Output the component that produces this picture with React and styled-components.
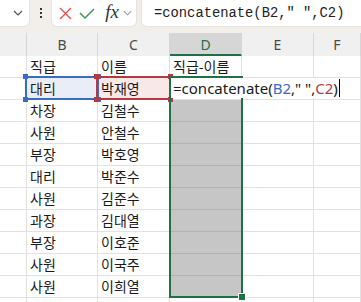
import styled, { createGlobalStyle } from 'styled-components';

const GlobalStyle = createGlobalStyle`
  html, body {
    margin: 0;
    padding: 0;
    width: 361px;
    height: 302px;
    overflow: hidden;
    background: #ffffff;
    font-family: "Noto Sans CJK KR", "Noto Sans", sans-serif;
  }
`;

const COLS = [27, 71, 72, 72, 72];
const ROW_H = 22;
const TOP = 56; // first data row

const Page = styled.div`
  width: 361px;
  height: 302px;
  overflow: hidden;
  display: flex;
  flex-direction: column;
`;

// toolbar
const Toolbar = styled.div`
  height: 33px;
  flex: none;
  background: #f2efeb;
  display: flex;
  align-items: flex-start;
  gap: 6px;
`;

const Box = styled.div`
  margin-top: -5px;
  height: 31px;
  background: #ffffff;
  border-radius: 5px;
  box-shadow: 0 0 0 1px #e6e3df;
  display: flex;
  align-items: center;
  box-sizing: border-box;
`;

const NameBox = styled(Box)`
  margin-left: -12px;
  width: 41px;
  justify-content: flex-end;
  padding: 5px 6px 0 0;
`;

const Dots = styled.div`
  width: 11px;
  height: 26px;
  display: flex;
  flex-direction: column;
  align-items: center;
  justify-content: center;
  gap: 2px;
  span {
    width: 2px;
    height: 2px;
    background: #333;
  }
`;

const FxBox = styled(Box)`
  width: 84px;
  padding: 5px 0 0 6px;
  gap: 0;
`;

const IconSlot = styled.div`
  width: ${p => p.$w}px;
  display: flex;
  align-items: center;
  justify-content: center;
`;

const Fx = styled.span`
  font-family: "Liberation Serif", "DejaVu Serif", serif;
  font-style: italic;
  font-size: 19px;
  color: #333;
  line-height: 1;
  margin-top: -3px;
`;

const FormulaBar = styled(Box)`
  flex: 1;
  margin-right: -10px;
  padding: 5px 0 0 12px;
  font-family: "Liberation Mono", monospace;
  font-size: 13.8px;
  color: #222;
  white-space: pre;
`;

// sheet
const Sheet = styled.div`
  position: relative;
  flex: 1;
`;

const Row = styled.div`
  display: grid;
  grid-template-columns: ${COLS.map(c => c + 'px').join(' ')} 1fr;
  height: ${p => p.$h}px;
`;

const HeadCell = styled.div`
  box-sizing: border-box;
  border-right: 1px solid #d6d6d6;
  border-bottom: ${p => (p.$active ? '3px solid #1e7145' : '1px solid #c4c4c4')};
  background: ${p => (p.$active ? '#d6d6d6' : '#f0f0f0')};
  color: ${p => (p.$active ? '#1e7145' : '#4a4a4a')};
  font-family: "Noto Sans", sans-serif;
  font-size: 14px;
  display: flex;
  align-items: center;
  justify-content: center;
  padding-top: ${p => (p.$active ? 2 : 0)}px;
`;

const Cell = styled.div`
  box-sizing: border-box;
  border-right: 1px solid ${p => (p.$sel ? '#b2b2b2' : '#e1e1e1')};
  border-bottom: 1px solid ${p => (p.$sel ? '#b2b2b2' : '#e1e1e1')};
  background: ${p => p.$fill || '#ffffff'};
  font-size: 14px;
  color: #1a1a1a;
  padding: 0 0 1px 3px;
  display: flex;
  align-items: center;
  white-space: nowrap;
`;

const Frame = styled.div`
  position: absolute;
  left: ${p => p.$x}px;
  top: ${p => p.$y}px;
  width: ${p => p.$w}px;
  height: ${p => p.$h}px;
  box-sizing: border-box;
  border: 2px solid ${p => p.$color};
`;

const Knob = styled.div`
  position: absolute;
  width: 5px;
  height: 5px;
  background: ${p => p.$color};
  left: ${p => (p.$r ? 'auto' : '-4px')};
  right: ${p => (p.$r ? '-4px' : 'auto')};
  top: ${p => (p.$b ? 'auto' : '-4px')};
  bottom: ${p => (p.$b ? '-4px' : 'auto')};
`;

const FillHandle = styled.div`
  position: absolute;
  right: -5px;
  bottom: -5px;
  width: 6px;
  height: 6px;
  background: #1e7145;
  border: 1px solid #ffffff;
`;

const Editor = styled.div`
  position: absolute;
  left: ${p => p.$x}px;
  top: ${p => p.$y}px;
  height: 20px;
  padding: 0 6px 0 2px;
  background: #ffffff;
  display: flex;
  align-items: center;
  font-family: "Noto Sans", sans-serif;
  font-size: 15px;
  color: #1a1a1a;
  white-space: pre;
`;

const Ref = styled.span`
  color: ${p => p.$color};
`;

const Caret = styled.span`
  display: inline-block;
  width: 1px;
  height: 18px;
  background: #000;
  margin-left: 1px;
`;

const data = [
  ['직급', '이름', '직급-이름'],
  ['대리', '박재영', ''],
  ['차장', '김철수'],
  ['사원', '안철수'],
  ['부장', '박호영'],
  ['대리', '박준수'],
  ['사원', '김준수'],
  ['과장', '김대열'],
  ['부장', '이호준'],
  ['사원', '이국주'],
  ['사원', '이희열'],
  ['', ''],
];

const colX = i => COLS.slice(0, i).reduce((a, b) => a + b, 0);
const rowY = r => TOP - 33 + (r - 1) * ROW_H; // r = 1-based data row, relative to sheet

const Chevron = ({ w = 10 }) => (
  <svg width={w} height="6" viewBox="0 0 10 6">
    <polyline points="1,1 5,5 9,1" fill="none" stroke="#555" strokeWidth="1.2" />
  </svg>
);

const RefFrame = ({ col, row, color }) => (
  <Frame $x={colX(col) - 2} $y={rowY(row) - 2} $w={COLS[col] + 3} $h={ROW_H + 2} $color={color}>
    <Knob $color={color} />
    <Knob $color={color} $r />
    <Knob $color={color} $b />
    <Knob $color={color} $r $b />
  </Frame>
);

const App = () => {
  const blue = '#3a6bc6';
  const red = '#b8383f';
  return (
    <Page>
      <GlobalStyle />
      <Toolbar>
        <NameBox>
          <Chevron />
        </NameBox>
        <Dots>
          <span />
          <span />
          <span />
        </Dots>
        <FxBox>
          <IconSlot $w={14}>
            <svg width="13" height="13" viewBox="0 0 13 13">
              <path d="M1 1 L12 12 M12 1 L1 12" stroke="#e0525a" strokeWidth="1.4" fill="none" />
            </svg>
          </IconSlot>
          <IconSlot $w={30}>
            <svg width="16" height="11" viewBox="0 0 16 11">
              <polyline points="1,5 6,10 15,1" stroke="#3f9b52" strokeWidth="1.5" fill="none" />
            </svg>
          </IconSlot>
          <IconSlot $w={20}>
            <Fx>fx</Fx>
          </IconSlot>
          <IconSlot $w={10}>
            <svg width="9" height="6" viewBox="0 0 10 6">
              <polyline points="1,1 5,5 9,1" fill="none" stroke="#999" strokeWidth="1.2" />
            </svg>
          </IconSlot>
        </FxBox>
        <FormulaBar>=concatenate(B2," ",C2)</FormulaBar>
      </Toolbar>

      <Sheet>
        <Row $h={23}>
          {['', 'B', 'C', 'D', 'E', 'F'].map((h, i) => (
            <HeadCell key={i} $active={h === 'D'}>{h}</HeadCell>
          ))}
        </Row>
        {data.map((r, ri) => {
          const sel = ri >= 2 && ri <= 10;
          return (
            <Row key={ri} $h={ROW_H}>
              <Cell />
              <Cell $fill={ri === 1 ? '#e8edf7' : undefined}>{r[0]}</Cell>
              <Cell $fill={ri === 1 ? '#f8e8e8' : undefined}>{r[1]}</Cell>
              <Cell $sel={sel} $fill={sel ? '#c6c6c6' : undefined}>{r[2] || ''}</Cell>
              <Cell />
              <Cell />
            </Row>
          );
        })}

        <RefFrame col={1} row={2} color={blue} />
        <RefFrame col={2} row={2} color={red} />

        <Frame $x={colX(3) - 1} $y={rowY(2) - 2} $w={COLS[3] + 2} $h={ROW_H * 10 + 2} $color="#1e7145">
          <FillHandle />
        </Frame>

        <Editor $x={colX(3) + 1} $y={rowY(2)}>
          =concatenate(<Ref $color={blue}>B2</Ref>," ",<Ref $color={red}>C2</Ref>)
          <Caret />
        </Editor>
      </Sheet>
    </Page>
  );
};

export default App;
